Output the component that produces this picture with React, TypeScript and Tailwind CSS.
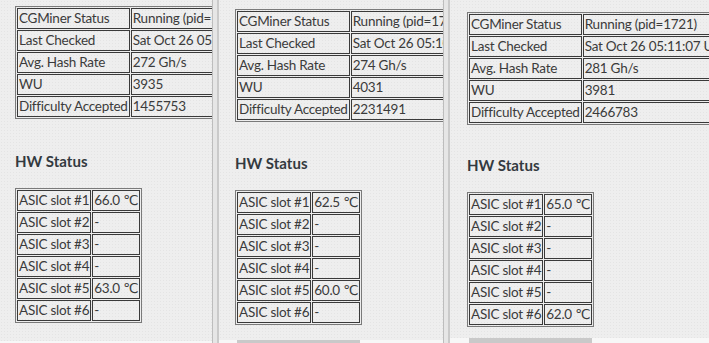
const font = { fontFamily: "Lato, 'Liberation Sans', 'DejaVu Sans', sans-serif" };

interface Row {
  label: string;
  value: string;
}

interface PanelData {
  status: Row[];
  slots: string[];
}

const panels: PanelData[] = [
  {
    status: [
      { label: "CGMiner Status", value: "Running (pid=1704)" },
      { label: "Last Checked", value: "Sat Oct 26 05:10:41 UTC 2019" },
      { label: "Avg. Hash Rate", value: "272 Gh/s" },
      { label: "WU", value: "3935" },
      { label: "Difficulty Accepted", value: "1455753" }
    ],
    slots: ["66.0 ℃", "-", "-", "-", "63.0 ℃", "-"]
  },
  {
    status: [
      { label: "CGMiner Status", value: "Running (pid=1712)" },
      { label: "Last Checked", value: "Sat Oct 26 05:10:58 UTC 2019" },
      { label: "Avg. Hash Rate", value: "274 Gh/s" },
      { label: "WU", value: "4031" },
      { label: "Difficulty Accepted", value: "2231491" }
    ],
    slots: ["62.5 ℃", "-", "-", "-", "60.0 ℃", "-"]
  },
  {
    status: [
      { label: "CGMiner Status", value: "Running (pid=1721)" },
      { label: "Last Checked", value: "Sat Oct 26 05:11:07 UTC 2019" },
      { label: "Avg. Hash Rate", value: "281 Gh/s" },
      { label: "WU", value: "3981" },
      { label: "Difficulty Accepted", value: "2466783" }
    ],
    slots: ["65.0 ℃", "-", "-", "-", "-", "62.0 ℃"]
  }
];

const cell =
  "border border-[#3a3a3a] px-[1px] py-0 leading-[19px] whitespace-nowrap text-left font-normal";
const table =
  "border-separate border-spacing-[1px] border border-[#7a7a7a] text-[13.5px] tracking-[-0.25px] text-[#3b3b3b]";

function StatusTable({ rows }: { rows: Row[] }) {
  return (
    <table className={table}>
      <tbody>
        {rows.map((r) => (
          <tr key={r.label}>
            <td className={cell + " w-[112px]"}>{r.label}</td>
            <td className={cell}>{r.value}</td>
          </tr>
        ))}
      </tbody>
    </table>
  );
}

function SlotTable({ slots }: { slots: string[] }) {
  return (
    <table className={table}>
      <tbody>
        {slots.map((s, i) => (
          <tr key={i}>
            <td className={cell + " w-[73px]"}>ASIC slot #{i + 1}</td>
            <td className={cell + " w-[47px]"}>{s}</td>
          </tr>
        ))}
      </tbody>
    </table>
  );
}

function Panel({
  data,
  className,
  padTop,
  padLeft,
  headMargin,
  bar
}: {
  data: PanelData;
  className: string;
  padTop: string;
  padLeft: string;
  headMargin: string;
  bar: React.ReactNode;
}) {
  return (
    <div className={"flex flex-col h-full overflow-hidden " + className}>
      <div className={"flex-1 overflow-hidden " + padTop + " " + padLeft}>
        <StatusTable rows={data.status} />
        <h3
          className={
            "mb-[17px] text-[15px] leading-[20px] font-bold text-[#333a40] " + headMargin
          }
        >
          HW Status
        </h3>
        <SlotTable slots={data.slots} />
      </div>
      {bar}
    </div>
  );
}

function Divider() {
  return (
    <div className="flex h-full w-[7px] shrink-0">
      <div className="w-[1px] bg-[#bdbdbd]" />
      <div className="w-[4px] bg-[#e6e6e6]" />
      <div className="w-[2px] bg-[#cacaca]" />
    </div>
  );
}

export default function App() {
  return (
    <div
      style={font}
      className="flex h-[343px] w-[709px] overflow-hidden bg-[#eeeeee] bg-[image:radial-gradient(#e4e4e4_0.7px,transparent_0.8px)] bg-[length:3px_3px]"
    >
      <Panel
        data={panels[0]}
        className="w-[212px] shrink-0"
        padTop="pt-[6px]"
        padLeft="pl-[15px]"
        headMargin="mt-[32px]"
        bar={<div className="h-[2px] bg-[#f7f7f7]" />}
      />
      <Divider />
      <Panel
        data={panels[1]}
        className="w-[224px] shrink-0"
        padTop="pt-[9px]"
        padLeft="pl-[16px]"
        headMargin="mt-[31px]"
        bar={
          <div className="h-[3px] bg-[#f7f7f7] pl-[18px]">
            <div className="h-full w-[123px] bg-[#c9c9c9]" />
          </div>
        }
      />
      <Divider />
      <Panel
        data={panels[2]}
        className="flex-1"
        padTop="pt-[12px]"
        padLeft="pl-[17px]"
        headMargin="mt-[30px]"
        bar={
          <div className="h-[5px] bg-[#f7f7f7] pl-[19px]">
            <div className="h-full w-[123px] bg-[#c9c9c9]" />
          </div>
        }
      />
    </div>
  );
}
